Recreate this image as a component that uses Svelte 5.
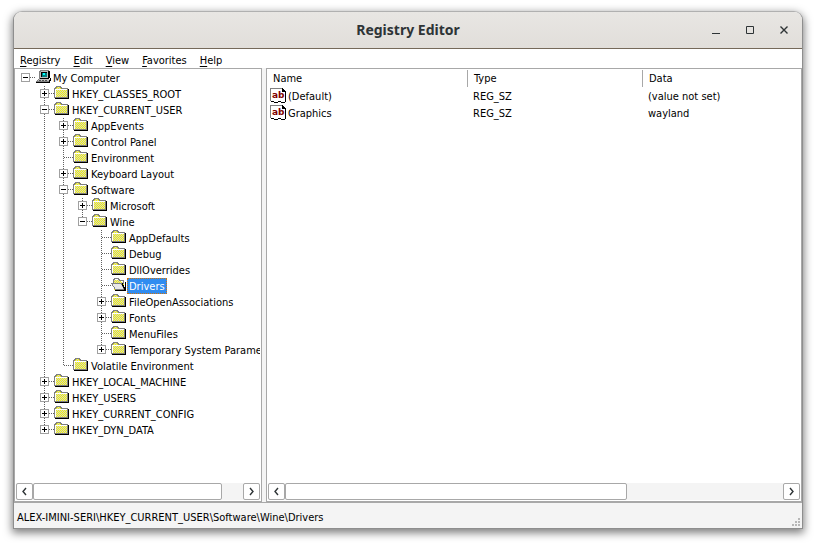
<script>
  const menus = ['Registry', 'Edit', 'View', 'Favorites', 'Help'];

  // level, label, sign of the expander ('' for a leaf)
  const keys = [
    { level: 0, label: 'My Computer', sign: '-' },
    { level: 1, label: 'HKEY_CLASSES_ROOT', sign: '+' },
    { level: 1, label: 'HKEY_CURRENT_USER', sign: '-' },
    { level: 2, label: 'AppEvents', sign: '+' },
    { level: 2, label: 'Control Panel', sign: '+' },
    { level: 2, label: 'Environment', sign: '' },
    { level: 2, label: 'Keyboard Layout', sign: '+' },
    { level: 2, label: 'Software', sign: '-' },
    { level: 3, label: 'Microsoft', sign: '+' },
    { level: 3, label: 'Wine', sign: '-' },
    { level: 4, label: 'AppDefaults', sign: '' },
    { level: 4, label: 'Debug', sign: '' },
    { level: 4, label: 'DllOverrides', sign: '' },
    { level: 4, label: 'Drivers', sign: '' },
    { level: 4, label: 'FileOpenAssociations', sign: '+' },
    { level: 4, label: 'Fonts', sign: '+' },
    { level: 4, label: 'MenuFiles', sign: '' },
    { level: 4, label: 'Temporary System Parameters', sign: '+' },
    { level: 2, label: 'Volatile Environment', sign: '' },
    { level: 1, label: 'HKEY_LOCAL_MACHINE', sign: '+' },
    { level: 1, label: 'HKEY_USERS', sign: '+' },
    { level: 1, label: 'HKEY_CURRENT_CONFIG', sign: '+' },
    { level: 1, label: 'HKEY_DYN_DATA', sign: '+' },
  ];

  const values = [
    { name: '(Default)', type: 'REG_SZ', data: '(value not set)' },
    { name: 'Graphics', type: 'REG_SZ', data: 'wayland' },
  ];

  let selected = $state('Drivers');

  // does the line at this level go on below row i?
  function continues(i, level) {
    for (let j = i + 1; j < keys.length; j++) {
      if (keys[j].level < level) return false;
      if (keys[j].level === level) return true;
    }
    return false;
  }

  const rows = keys.map((key, i) => ({
    ...key,
    guides: Array.from({ length: key.level }, (_, l) => l > 0 && continues(i, l)),
    more: key.level > 0 && continues(i, key.level),
  }));
</script>

{#snippet scrollbar(size, label)}
  <div class="scrollbar">
    <button class="arrow" aria-label="Scroll {label} left">
      <svg width="15" height="15"><path d="M9 4 L6 7.5 L9 11" fill="none" stroke="#2e3436" stroke-width="1.4" /></svg>
    </button>
    <div class="track"><div class="thumb" style="width: {size}%"></div></div>
    <button class="arrow" aria-label="Scroll {label} right">
      <svg width="15" height="15"><path d="M6 4 L9 7.5 L6 11" fill="none" stroke="#2e3436" stroke-width="1.4" /></svg>
    </button>
  </div>
{/snippet}

<svg class="defs" width="0" height="0" aria-hidden="true">
  <defs>
    <pattern id="dither" width="2" height="2" patternUnits="userSpaceOnUse">
      <rect width="2" height="2" fill="#d0d0d0" />
      <rect width="1" height="1" fill="#f6f600" />
      <rect x="1" y="1" width="1" height="1" fill="#f6f600" />
    </pattern>
  </defs>
</svg>

<div class="window">
  <header>
    <h1>Registry Editor</h1>
    <div class="controls">
      <button aria-label="Minimize"><svg width="10" height="10"><path d="M1 8.5H9" /></svg></button>
      <button aria-label="Maximize"><svg width="10" height="10"><path d="M1.5 1.5H8.5V8.5H1.5Z" /></svg></button>
      <button aria-label="Close"><svg width="10" height="10"><path d="M1.5 1.5L8.5 8.5M8.5 1.5L1.5 8.5" stroke-width="1.4" /></svg></button>
    </div>
  </header>

  <nav>
    {#each menus as menu}
      <button><u>{menu[0]}</u>{menu.slice(1)}</button>
    {/each}
  </nav>

  <main>
    <section class="pane keys">
      <div class="tree" role="tree" aria-label="Registry keys">
        {#each rows as row}
          <div class="row" role="treeitem" aria-level={row.level + 1} aria-selected={selected === row.label}>
            {#each row.guides as line}
              <svg class="guide" width="19" height="16" shape-rendering="crispEdges">
                {#if line}<path d="M9.5 0V16" stroke="#606060" stroke-dasharray="1 1" />{/if}
              </svg>
            {/each}
            <svg class="guide" width="19" height="16" shape-rendering="crispEdges">
              {#if row.level > 0}
                <path d="M9.5 0V{row.more ? 16 : 8}" stroke="#606060" stroke-dasharray="1 1" />
              {/if}
              <path d="M10 7.5H19" stroke="#606060" stroke-dasharray="1 1" />
              {#if row.sign}
                <rect x="5.5" y="3.5" width="8" height="8" fill="#fff" stroke="#a0a0a0" />
                <path d="M7 7.5H12" stroke="#000" />
                {#if row.sign === '+'}<path d="M9.5 5V10" stroke="#000" />{/if}
              {/if}
            </svg>
            {#if row.level === 0}
              <svg class="icon" width="16" height="16" shape-rendering="crispEdges">
                <path d="M4 1H13V9H4Z" fill="#c0c0c0" />
                <path d="M4.5 9V1.5H5.5V0.5H13.5" fill="none" stroke="#808080" />
                <path d="M6 2H12V7H6Z" fill="#000" />
                <path d="M7 3H12V7H7Z" fill="#008080" />
                <path d="M8 3H10V5H8Z" fill="#0ff" />
                <path d="M13 1H15V8H14V9H5V8H13Z" fill="#000" />
                <path d="M3 9H15V10H14V12H2V10H3Z" fill="#c0c0c0" />
                <path d="M4 10H6V11H4ZM7 10H9V11H7ZM10 10H12V11H10Z" fill="#505050" />
                <path d="M3 9H4V10H3ZM2 10H3V11H2ZM1 11H14V12H1Z" fill="#808080" />
                <path d="M1 12H15V13H1ZM14 10H15V12H14ZM15 8H16V11H15Z" fill="#000" />
              </svg>
            {:else if row.label === selected}
              <svg class="icon" width="16" height="16" shape-rendering="crispEdges">
                <path d="M3 2H8L10 4H13V12H3Z" fill="url(#dither)" />
                <path d="M2.5 5V1.5H3.5V0.5H7.5V1.5H8.5V2.5H12.5V6" fill="none" stroke="#808080" />
                <path d="M0.5 5.5H10.5L13 11.5H4.5Z" fill="#e8e8e8" stroke="#808080" />
                <path d="M4 12H15V13H4ZM14 4H15V12H14ZM11 5H12V7H13V9H14V12H13V10H12V8H11Z" fill="#000" />
              </svg>
            {:else}
              <svg class="icon" width="16" height="16" shape-rendering="crispEdges">
                <path d="M1 3H13V12H1Z" fill="url(#dither)" />
                <path d="M2 1H7V3H2Z" fill="url(#dither)" />
                <path d="M0.5 12V2.5H1.5V1.5H2.5V0.5H6.5V1.5H7.5V2.5H13.5V11.5H1" fill="none" stroke="#808080" />
                <path d="M1.5 11V3.5H13" fill="none" stroke="#fff" />
                <path d="M1 12H15V13H1ZM14 3H15V12H14Z" fill="#000" />
              </svg>
            {/if}
            <button class="label" class:selected={selected === row.label} onclick={() => (selected = row.label)}>
              {row.label}
            </button>
          </div>
        {/each}
      </div>
      {@render scrollbar(90, 'keys')}
    </section>

    <section class="pane values">
      <div class="list">
        <table>
          <thead>
            <tr><th class="name">Name</th><th class="type">Type</th><th>Data</th></tr>
          </thead>
          <tbody>
            {#each values as value}
              <tr>
                <td>
                  <div class="value">
                    <svg width="17" height="16" shape-rendering="crispEdges">
                      <path d="M1 1H13L15 3V14H12V13H9V14H5V13H1Z" fill="#fff" />
                      <path d="M0.5 13V0.5H12.5" fill="none" stroke="#808080" />
                      <path d="M12 0H13V1H14V2H15V3H16V14H15V4H12Z" fill="#000" />
                      <path d="M1 13H4V14H1ZM4 14H8V15H4ZM8 13H11V14H8ZM11 14H15V15H11Z" fill="#000" />
                      <text x="2" y="10">ab</text>
                    </svg>
                    {value.name}
                  </div>
                </td>
                <td>{value.type}</td>
                <td>{value.data}</td>
              </tr>
            {/each}
          </tbody>
        </table>
      </div>
      {@render scrollbar(68.6, 'values')}
    </section>
  </main>

  <footer>
    <span>ALEX-IMINI-SERI\HKEY_CURRENT_USER\Software\Wine\Drivers</span>
    <svg width="8" height="8" shape-rendering="crispEdges" aria-hidden="true">
      <path d="M6 0H8V2H6ZM3 3H5V5H3ZM6 3H8V5H6ZM0 6H2V8H0ZM3 6H5V8H3ZM6 6H8V8H6Z" fill="#b8b8b8" />
    </svg>
  </footer>
</div>

<style>
  :global(body) {
    background: #fff;
  }
  :global(#app) {
    display: flex;
    height: 100vh;
  }
  .defs {
    position: absolute;
  }
  .window {
    flex: 1;
    min-width: 0;
    display: flex;
    flex-direction: column;
    margin: 11px 13px 16px;
    box-sizing: border-box;
    border: 1px solid #8e8e8e;
    border-top-color: #b0b0b0;
    border-radius: 9px 9px 0 0;
    overflow: hidden;
    background: #fff;
    color: #000;
    font: 11px/18px 'DejaVu Sans Condensed', 'DejaVu Sans', sans-serif;
    box-shadow: 0 3px 9px 1px rgba(0, 0, 0, 0.5);
  }
  button {
    margin: 0;
    padding: 0;
    border: 0;
    background: none;
    color: inherit;
    font: inherit;
  }
  svg {
    display: block;
    flex: none;
  }

  header {
    display: grid;
    grid-template-columns: 1fr auto 1fr;
    align-items: center;
    height: 36px;
    border-bottom: 1px solid #75695a;
    background: linear-gradient(#e8e6e3, #e1deda);
  }
  h1 {
    grid-column: 2;
    margin: 0;
    color: #2e3436;
    font-family: 'Noto Sans', sans-serif;
    font-size: 14px;
    line-height: 20px;
    font-weight: 700;
  }
  .controls {
    display: flex;
    justify-content: flex-end;
    gap: 24px;
    padding-right: 13px;
  }
  .controls path {
    fill: none;
    stroke: #2e3436;
  }

  nav {
    display: flex;
    gap: 13px;
    height: 19px;
    padding-left: 6px;
  }
  nav button {
    line-height: 24px;
  }
  u {
    text-underline-offset: 2px;
  }

  main {
    flex: 1;
    min-height: 0;
    display: flex;
    gap: 4px;
    background: #f4f4f4;
    border-bottom: 1px solid #a8a8a8;
  }
  .pane {
    display: flex;
    flex-direction: column;
    min-width: 0;
    box-sizing: border-box;
    border: 1px solid #a8a8a8;
    background: #fff;
  }
  .keys {
    flex: 0 0 248px;
  }
  .values {
    flex: 1;
  }
  .tree {
    flex: 1;
    margin: 1px;
    overflow: hidden;
  }
  .row {
    display: flex;
    height: 16px;
  }
  .label {
    height: 16px;
    padding: 1px 2px 0;
    line-height: 16px;
    white-space: nowrap;
  }
  .selected {
    background: #308cf0;
    color: #fff;
    outline: 1px dotted #cf730f;
    outline-offset: -1px;
  }

  .list {
    flex: 1;
    overflow: hidden;
  }
  table {
    width: 100%;
    border-collapse: collapse;
    table-layout: fixed;
  }
  th {
    padding: 1px 6px 0;
    height: 17px;
    text-align: left;
    font-weight: 400;
    background: linear-gradient(#a8a8a8, #a8a8a8) right 1px / 1px 17px no-repeat;
  }
  th:last-child {
    background: none;
  }
  .name {
    width: 189px;
  }
  .type {
    width: 163px;
  }
  td {
    height: 17px;
    padding: 0 5px;
    line-height: 17px;
  }
  td:first-child {
    padding: 0 3px;
  }
  .value {
    display: flex;
    gap: 1px;
  }
  .value text {
    fill: #800000;
    font: bold 9px 'DejaVu Sans', sans-serif;
  }

  .scrollbar {
    display: flex;
    height: 17px;
    margin: 1px;
    background: #f4f4f4;
  }
  .arrow,
  .thumb {
    box-sizing: border-box;
    height: 17px;
    border: 1px solid #a8a8a8;
    border-radius: 2px;
    background: #fff;
  }
  .arrow {
    width: 17px;
  }
  .track {
    flex: 1;
  }

  footer {
    display: flex;
    justify-content: space-between;
    align-items: flex-end;
    height: 25px;
    padding: 0 2px 0 3px;
    background: #f4f4f4;
  }
  footer span {
    line-height: 20px;
  }
  footer svg {
    margin-bottom: 2px;
  }
</style>
